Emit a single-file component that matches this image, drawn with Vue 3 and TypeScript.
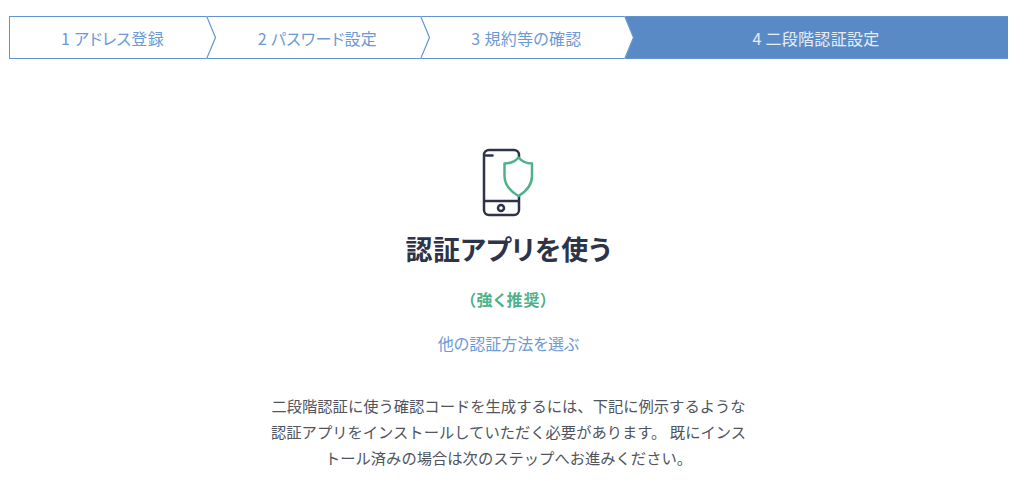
<template>
  <div class="page">
    <ol class="steps">
      <li
        v-for="(step, i) in steps"
        :key="step"
        class="step"
        :class="{ active: i === steps.length - 1 }"
      >
        <span class="step-label">{{ i + 1 }} {{ step }}</span>
        <svg v-if="i < steps.length - 1" class="chevron" width="11" height="43" viewBox="0 0 11 43">
          <path d="M1 0 L9.500 21.500 L1 43 L0 43 L0 0 Z" fill="#fff" />
          <path d="M0.500 0 L9.500 21.500 L0.500 43" fill="none" stroke="#6393d2" stroke-width="1.200" />
        </svg>
      </li>
    </ol>

    <main class="content">
      <svg class="icon" width="60" height="76" viewBox="0 0 60 76" fill="none" stroke-linecap="round" stroke-linejoin="round">
        <rect x="5" y="5" width="35" height="65" rx="5" stroke="#2d3448" stroke-width="2.500" />
        <path d="M6 56 H39 M7 10.500 H13.500" stroke="#2d3448" stroke-width="2.500" />
        <circle cx="22" cy="63" r="3" stroke="#2d3448" stroke-width="2.500" />
        <path
          d="M39.500 12.500 C36.500 16 31 18.500 25.500 18.500 V31 C25.500 40 32 46.500 39.500 51 C47 46.500 53 40 53 31 V18.500 C48 18.500 42.500 16 39.500 12.500 Z"
          fill="#fff"
          stroke="#4fb18a"
          stroke-width="2.500"
        />
      </svg>
      <h1 class="title">認証アプリを使う</h1>
      <p class="note">（強く推奨）</p>
      <a class="link">他の認証方法を選ぶ</a>
      <p class="desc">
        二段階認証に使う確認コードを生成するには、下記に例示するような認証アプリをインストールしていただく必要があります。 既にインストール済みの場合は次のステップへお進みください。
      </p>
    </main>
  </div>
</template>

<script setup lang="ts">
const steps: string[] = ['アドレス登録', 'パスワード設定', '規約等の確認', '二段階認証設定'];
</script>

<style>
html,
body {
  background: #fff;
}
</style>

<style scoped>
.page {
  width: 1024px;
  height: 482px;
  overflow: hidden;
  padding: 16px 16px 0 9px;
  box-sizing: border-box;
  font-family: "Noto Sans CJK JP", "Noto Sans", sans-serif;
  font-feature-settings: "palt";
}

.steps {
  display: grid;
  grid-template-columns: 197px 214px 204px 384px;
  height: 43px;
  margin: 0;
  padding: 0;
  list-style: none;
  box-sizing: border-box;
}

.step {
  position: relative;
  display: flex;
  align-items: center;
  justify-content: center;
  box-sizing: border-box;
  border-top: 1px solid #6393d2;
  border-bottom: 1px solid #6393d2;
  color: #6b9ad4;
  font-size: 16px;
  letter-spacing: 0.3px;
  padding-left: 9px;
}

.step:first-child {
  border-left: 1px solid #6393d2;
}

.step.active {
  background: #5a8ac6;
  border-color: #6393d2;
  color: #e6eef8;
  padding-left: 0;
}

.step-label {
  line-height: 1;
}

.chevron {
  position: absolute;
  top: -1px;
  left: 100%;
  z-index: 1;
  display: block;
}

.content {
  display: flex;
  flex-direction: column;
  align-items: center;
  padding-top: 86px;
}

.icon {
  display: block;
}

.title {
  margin: 8px 0 0;
  color: #2d3448;
  font-size: 27px;
  font-weight: 700;
  letter-spacing: 0.4px;
  line-height: 40px;
}

.note {
  margin: 18px 0 0;
  color: #4fb18a;
  font-size: 16px;
  font-weight: 700;
  letter-spacing: 1px;
  line-height: 24px;
}

.link {
  margin-top: 20px;
  color: #6b9ad4;
  font-size: 16px;
  line-height: 24px;
}

.desc {
  width: 476px;
  margin: 37px 0 0;
  color: #50545e;
  font-size: 15.300px;
  font-feature-settings: "pkna";
  line-height: 26px;
  text-align: center;
}
</style>
